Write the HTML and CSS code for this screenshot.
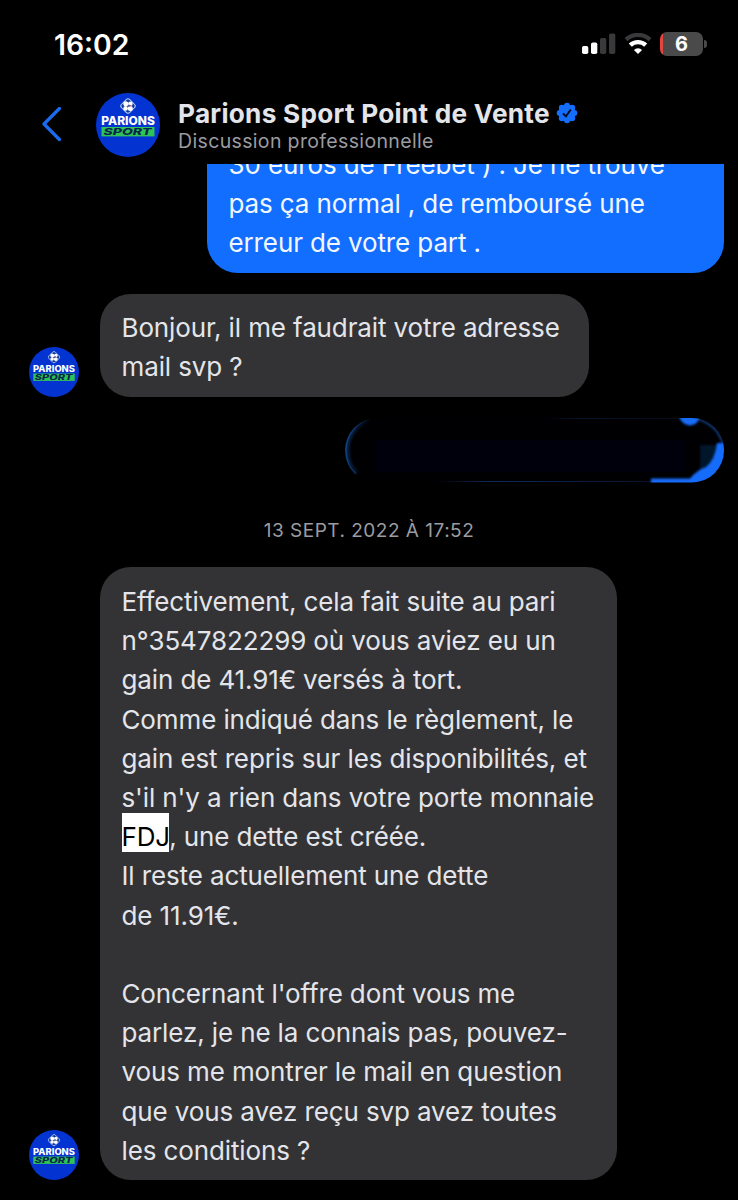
FILE: index.html
```
<!DOCTYPE html>
<html lang="fr">
<head>
    <meta charset="UTF-8">
    <title>Parions Sport Point de Vente</title>
    <link rel="stylesheet" href="styles.css">
</head>
<body>

    <!-- Logo partagé par l'en-tête et les messages -->
    <svg width="0" height="0" class="defs">
        <symbol id="logo" viewBox="0 0 64 64">
            <circle cx="32" cy="32" r="32" fill="#0334d2"/>
            <rect x="26.2" y="7.2" width="11.6" height="11.6" rx="2.5" transform="rotate(45 32 13)" fill="#123a9c" stroke="#b9d2f5" stroke-width="1"/>
            <g fill="#fff">
                <circle cx="29.8" cy="10.8" r="2.5"/>
                <circle cx="34.4" cy="10.8" r="2.3"/>
                <circle cx="29.6" cy="15.4" r="2.3"/>
                <circle cx="34.3" cy="15.5" r="2.5"/>
            </g>
            <circle cx="33.8" cy="12.8" r="1" fill="#b3364a"/>
            <text x="5.2" y="32.4" textLength="53.6" lengthAdjust="spacingAndGlyphs" class="logo-top">PARIONS</text>
            <rect x="5.5" y="34" width="53" height="9.4" fill="#2fc258"/>
            <text x="7.5" y="41.9" textLength="48" lengthAdjust="spacingAndGlyphs" class="logo-bottom">SPORT</text>
        </symbol>
    </svg>

    <div class="statusbar">
        <span class="time">16:02</span>
        <div class="indicators">
            <svg width="34" height="22" viewBox="0 0 34 22">
                <rect x="0" y="13" width="6.3" height="8" rx="1.8" fill="#fff"/>
                <rect x="9" y="9.5" width="6.3" height="11.5" rx="1.8" fill="#fff"/>
                <rect x="18" y="5" width="6.3" height="16" rx="1.8" fill="#39393b"/>
                <rect x="27" y="0.5" width="6.3" height="20.5" rx="1.8" fill="#39393b"/>
            </svg>
            <svg class="wifi" width="28" height="22" viewBox="0 0 28 22">
                <path d="M2 6.6A17.5 17.5 0 0 1 26 6.6" fill="none" stroke="#39393b" stroke-width="4.2"/>
                <path d="M6.3 12.2A11.2 11.2 0 0 1 21.7 12.2" fill="none" stroke="#fff" stroke-width="4.4"/>
                <path d="M14 21L9.9 16.9A6 6 0 0 1 18.1 16.9Z" fill="#fff"/>
            </svg>
            <div class="battery">6</div>
        </div>
    </div>

    <div class="header">
        <svg class="back" width="20" height="36" viewBox="0 0 20 36">
            <path d="M18.4 2.5L3 18L18.4 33.5" fill="none" stroke="#196bf0" stroke-width="3.2" stroke-linecap="round" stroke-linejoin="round"/>
        </svg>
        <svg class="avatar-big"><use href="#logo"/></svg>
        <div class="contact">
            <div class="name">
                <h1>Parions Sport Point de Vente</h1>
                <svg width="22" height="22" viewBox="0 0 22 22">
                    <g fill="#146dfb">
                        <circle cx="11" cy="11" r="8.6"/>
                        <circle cx="11" cy="3.7" r="3"/><circle cx="16.2" cy="5.8" r="3"/>
                        <circle cx="18.3" cy="11" r="3"/><circle cx="16.2" cy="16.2" r="3"/>
                        <circle cx="11" cy="18.3" r="3"/><circle cx="5.8" cy="16.2" r="3"/>
                        <circle cx="3.7" cy="11" r="3"/><circle cx="5.8" cy="5.8" r="3"/>
                    </g>
                    <path d="M7 11.5L10 14.4L14.8 7.5" fill="none" stroke="#000a20" stroke-width="1.9"/>
                </svg>
            </div>
            <p class="subtitle">Discussion professionnelle</p>
        </div>
    </div>

    <div class="chat">
        <div class="row sent">
            <div class="bubble blue">30 euros de Freebet ) . Je ne trouve<br>pas ça normal , de remboursé une<br>erreur de votre part .</div>
        </div>

        <div class="row">
            <svg class="avatar"><use href="#logo"/></svg>
            <div class="bubble short">Bonjour, il me faudrait votre adresse<br>mail svp ?</div>
        </div>

        <div class="row sent">
            <!-- Message masqué -->
            <svg class="masked" width="380" height="65" viewBox="-1 0 380 65">
                <defs>
                    <clipPath id="pill"><rect x="0" y="0" width="379" height="64.5" rx="32"/></clipPath>
                    <filter id="soft" x="-20%" y="-20%" width="140%" height="140%"><feGaussianBlur stdDeviation="1.1"/></filter>
                    <filter id="softer" x="-30%" y="-50%" width="160%" height="200%"><feGaussianBlur stdDeviation="6"/></filter>
                    <linearGradient id="leftEdge" x1="0" x2="1"><stop offset="0" stop-color="#123f7c"/><stop offset="1" stop-color="#123f7c" stop-opacity="0"/></linearGradient>
                    <linearGradient id="line" x1="0" x2="1">
                        <stop offset="0" stop-color="#1b52b0" stop-opacity="0"/>
                        <stop offset="0.25" stop-color="#1b52b0" stop-opacity="0.5"/>
                        <stop offset="1" stop-color="#1b52b0" stop-opacity="0.2"/>
                    </linearGradient>
                </defs>
                <g clip-path="url(#pill)">
                    <rect width="380" height="65" fill="#000003"/>
                    <rect x="30" y="22" width="310" height="32" fill="#000009" filter="url(#softer)"/>
                    <path d="M26 1A32 32 0 0 0 1 32Q1 48 11 56" fill="none" stroke="url(#leftEdge)" stroke-width="7" filter="url(#soft)" opacity="0.55"/>
                    <path d="M26 1A32 32 0 0 0 1 32Q1 48 11 56" fill="none" stroke="url(#leftEdge)" stroke-width="1.6"/>
                    <rect x="90" y="63" width="230" height="1" fill="url(#line)"/>
                    <rect x="200" y="0" width="140" height="1" fill="url(#line)" opacity="0.5"/>
                    <path d="M352 0Q374 8 378 26" fill="none" stroke="#0f3168" stroke-width="3" filter="url(#soft)"/>
                    <path d="M355 27H376V44L355 54Z" fill="#03122a" filter="url(#soft)"/>
                    <path d="M333 -4H355Q354 7.5 344 7.5Q336 6.5 333 -4Z" fill="#176cf5" filter="url(#soft)"/>
                    <path d="M372 25H386V70H306V60.5H345Q352 52 361 49Q370 42 372 25Z" fill="#176cfa" filter="url(#soft)"/>
                </g>
            </svg>
        </div>

        <div class="date">13 SEPT. 2022 À 17:52</div>

        <div class="row">
            <svg class="avatar"><use href="#logo"/></svg>
            <div class="bubble long">Effectivement, cela fait suite au pari<br>n°3547822299 où vous aviez eu un<br>gain de 41.91€ versés à tort.<br>Comme indiqué dans le règlement, le<br>gain est repris sur les disponibilités, et<br>s'il n'y a rien dans votre porte monnaie<br><mark>FDJ</mark>, une dette est créée.<br>Il reste actuellement une dette<br>de 11.91€.<br><br>Concernant l'offre dont vous me<br>parlez, je ne la connais pas, pouvez-<br>vous me montrer le mail en question<br>que vous avez reçu svp avez toutes<br>les conditions ?</div>
        </div>
    </div>

</body>
</html>
```
FILE: styles.css
```
* {
    box-sizing: border-box;
}

body {
    margin: 0;
    height: 1200px;
    display: flex;
    flex-direction: column;
    overflow: hidden;
    background-color: #000;
    color: #e4e5ea;
    font-family: Inter, sans-serif;
}

.defs {
    position: absolute;
}

.logo-top {
    font: 800 11.5px Inter, sans-serif;
    fill: #fff;
}

.logo-bottom {
    font: italic 800 9.4px Inter, sans-serif;
    fill: #06264a;
}

/* Barre d'état */
.statusbar {
    height: 88px;
    flex: none;
    display: flex;
    align-items: center;
    justify-content: space-between;
    padding: 0 32px 0 54px;
}

.time {
    padding-top: 1px;
    font-size: 28.3px;
    font-weight: 600;
    color: #fff;
}

.indicators {
    display: flex;
    align-items: center;
}

.wifi {
    margin: 0 8px 0 8px;
}

.battery {
    position: relative;
    width: 43px;
    height: 24px;
    margin-right: 3px;
    border-radius: 7px;
    background: linear-gradient(to right, #e4453f 3px, #4a4a4b 3px);
    color: #fff;
    font-size: 20px;
    font-weight: 700;
    line-height: 25px;
    text-align: center;
}

.battery::after {
    content: "";
    position: absolute;
    right: -4px;
    top: 8px;
    width: 3px;
    height: 8px;
    border-radius: 0 3px 3px 0;
    background-color: #4a4a4b;
}

/* En-tête */
.header {
    height: 76px;
    flex: none;
    display: flex;
    align-items: flex-start;
    padding: 5px 0 0 41px;
}

.back {
    margin-top: 13px;
}

.avatar-big {
    width: 64px;
    height: 64px;
    margin: 0 18px 0 35px;
}

.name {
    display: flex;
    align-items: center;
    gap: 6px;
    height: 32px;
    margin-top: 4px;
}

h1 {
    margin: 0;
    font-size: 26.2px;
    font-weight: 650;
    letter-spacing: 0.25px;
    white-space: nowrap;
}

.subtitle {
    margin: 0;
    padding-top: 1px;
    font-size: 19.5px;
    line-height: 22px;
    letter-spacing: 0.35px;
    color: #9b9ca1;
}

/* Conversation */
.chat {
    flex: 1;
    min-height: 0;
    display: flex;
    flex-direction: column;
    justify-content: flex-end;
    overflow: hidden;
    padding: 0 14px 19.6px 29px;
}

.row {
    flex: none;
    display: flex;
    align-items: flex-end;
    gap: 21px;
    margin-top: 21px;
}

.sent {
    justify-content: flex-end;
}

.avatar {
    width: 50px;
    height: 50px;
}

.bubble {
    padding: 14.6px 21.5px 10.4px;
    border-radius: 31px;
    background-color: #333335;
    font-size: 26px;
    line-height: 39.2px;
    letter-spacing: -0.12px;
    white-space: nowrap;
}

.blue {
    width: 517px;
    background-color: #126eff;
    color: #f2f7ff;
}

.short {
    width: 489px;
}

.long {
    width: 517px;
}

.masked {
    display: block;
}

.date {
    flex: none;
    height: 84.4px;
    padding: 36.4px 15px 0 0;
    font-size: 19px;
    line-height: 24px;
    letter-spacing: 0.5px;
    text-align: center;
    color: #9b9ca1;
}

.date + .row {
    margin-top: 0;
}

mark {
    padding: 8px 0 0;
    background-color: #fff;
    color: #000;
}
```
